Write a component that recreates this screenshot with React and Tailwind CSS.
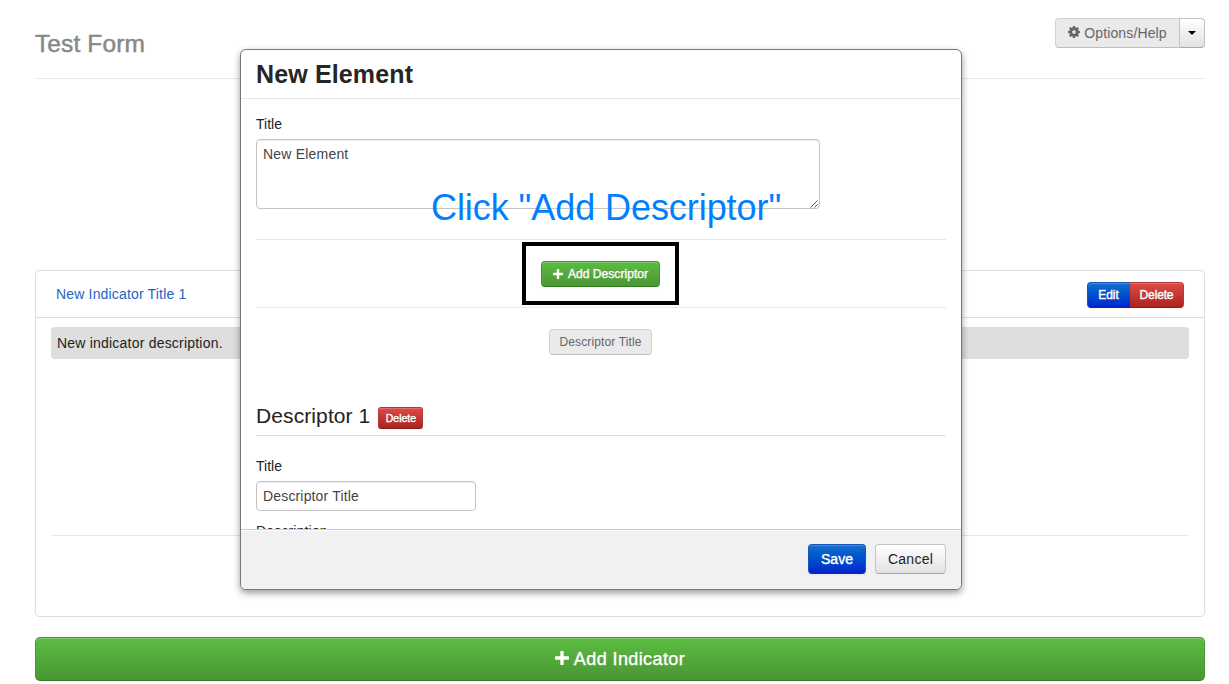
import React from "react";

function Plus({ className }) {
  return (
    <svg viewBox="0 0 14 14" className={className} fill="currentColor" aria-hidden="true">
      <path d="M6 0h2q.7 0 .7 .7v4.600h4.600q.7 0 .7 .7v2q0 .7-.7 .7H8.700v4.600q0 .7-.7 .7H6q-.7 0-.7-.7V8.700H.7Q0 8.700 0 8V6q0-.7 .7-.7h4.600V.7Q5.300 0 6 0z" />
    </svg>
  );
}

function Cog({ className }) {
  const angles = [0, 45, 90, 135, 180, 225, 270, 315];
  return (
    <svg viewBox="0 0 12 12" className={className} aria-hidden="true">
      {angles.map((a) => (
        <path key={a} d="M4.900 0h2.200l.4 2.500h-3z" fill="currentColor" transform={`rotate(${a} 6 6)`} />
      ))}
      <circle cx="6" cy="6" r="3.200" fill="none" stroke="currentColor" strokeWidth="2.700" />
    </svg>
  );
}

const btn =
  "flex items-center justify-center border whitespace-nowrap [text-shadow:0_-1px_0_rgba(0,0,0,0.25)] text-white shadow-[inset_0_1px_0_rgba(255,255,255,0.2),0_1px_2px_rgba(0,0,0,0.05)]";
const green = "bg-linear-to-b from-[#5bbd42] to-[#4a9634] border-[#4a9634] border-b-[#357a22]";
const blue = "bg-linear-to-b from-[#1a6fcb] to-[#0520cd] border-[#1455b8] border-b-[#0a2bb0]";
const red = "bg-linear-to-b from-[#e04a47] to-[#a9231f] border-[#b43a36] border-b-[#8a1f1c]";
const bold = "[-webkit-text-stroke:0.4px_currentColor]";

function PageHeader() {
  return (
    <header className="flex h-[79px] items-start justify-between border-b border-[#e8e8e8]">
      <h1 className="mt-[24px] text-[24.5px] leading-[40px] tracking-[0.12px] text-[#888] [-webkit-text-stroke:0.5px_#888]">
        Test Form
      </h1>
      <div className="mt-[18px] flex h-[30px] text-[14px]">
        <button className="flex w-[124px] items-center justify-center gap-[4px] rounded-l-[4px] border border-r-0 border-[#d2d2d2] border-b-[#bfbfbf] bg-[#eaeaea] tracking-[0.14px] text-[#666]">
          <Cog className="h-[12px] w-[12px] -translate-y-px" />
          Options/Help
        </button>
        <button className="flex w-[26px] items-center justify-center rounded-r-[4px] border border-[#c2c2c2] border-b-[#a8a8a8] bg-linear-to-b from-white to-[#e2e2e2]">
          <svg viewBox="0 0 8 4" className="h-[4px] w-[8px]">
            <path d="M0 0h8L4 4z" fill="#000" />
          </svg>
        </button>
      </div>
    </header>
  );
}

function IndicatorPanel() {
  return (
    <section className="mt-[191px] flex h-[347px] flex-col rounded-[4px] border border-[#dedede]">
      <div className="flex h-[47px] items-center justify-between border-b border-[#dedede] pr-[20px] pl-[20px]">
        <a className="text-[14px] leading-[20px] tracking-[0.17px] text-[#2165c4]">New Indicator Title 1</a>
        <div className="mt-[2px] flex h-[26px] text-[12px]">
          <button className={`${btn} ${blue} ${bold} w-[43px] rounded-l-[4px] border-r-0 pr-px`}>Edit</button>
          <button className={`${btn} ${red} ${bold} w-[54px] rounded-r-[4px] border-l-0 tracking-[-0.15px]`}>Delete</button>
        </div>
      </div>
      <div className="mx-[15px] mt-[9px] flex h-[32px] items-center rounded-[4px] bg-[#dedede] px-[6px] text-[14px] tracking-[0.21px] text-[#222]">
        New indicator description.
      </div>
      <div className="mx-[15px] mt-[176px] border-t border-[#e8e8e8]" />
    </section>
  );
}

function Modal() {
  return (
    <div className="absolute top-[49px] left-[240px] flex h-[541px] w-[722px] flex-col overflow-hidden rounded-[6px] border border-[#777] bg-white shadow-[0_3px_7px_rgba(0,0,0,0.4)]">
      <div className="flex h-[49px] shrink-0 items-center border-b border-[#e5e5e5] px-[15px] pb-px">
        <h2 className="text-[25px] leading-[30px] font-bold tracking-[0.14px] text-[#262626]">New Element</h2>
      </div>
      <div className="h-[430px] shrink-0 overflow-hidden px-[15px] pt-[15px] text-[14px] leading-[20px] text-[#222]">
        <label className="block">Title</label>
        <div className="mt-[5px] flex h-[70px] w-[564px] items-start justify-between rounded-[4px] border border-[#c4c4c4] px-[6px] pt-[4px] text-[#444] shadow-[inset_0_1px_1px_rgba(0,0,0,0.075)]">
          <span className="tracking-[0.2px]">New Element</span>
          <svg viewBox="0 0 8 8" className="mt-[56px] -mr-[5px] h-[8px] w-[8px]" fill="none" stroke="#555">
            <path d="M.5 7.500l7-7M4.500 7.500l3-3" />
          </svg>
        </div>
        <div className="mt-[30px] border-t border-[#e8e8e8]" />
        <div className="flex h-[67px] items-start justify-center pt-[21px] pr-px">
          <button className={`${btn} ${green} ${bold} h-[26px] w-[119px] gap-[5px] rounded-[4px] text-[12px] tracking-[0.06px]`}>
            <Plus className="h-[10px] w-[10px]" />
            Add Descriptor
          </button>
        </div>
        <div className="border-t border-[#e8e8e8]" />
        <div className="mt-[21px] flex justify-center pr-[2px]">
          <button className="h-[26px] w-[103px] rounded-[4px] border border-[#d2d2d2] border-b-[#bfbfbf] bg-[#eaeaea] pl-px text-[12px] leading-[24px] tracking-[0.12px] text-[#666]">
            Descriptor Title
          </button>
        </div>
        <div className="mt-[45px] flex h-[36px] items-start gap-[8px] border-b border-[#dedede]">
          <h3 className="pt-px text-[21px] leading-[30px] tracking-[0.1px]">Descriptor 1</h3>
          <button className={`${btn} ${red} ${bold} mt-[7px] h-[22px] w-[45px] rounded-[3px] text-[10.5px]`}>Delete</button>
        </div>
        <label className="mt-[20px] block">Title</label>
        <div className="mt-[5px] h-[30px] w-[220px] rounded-[4px] border border-[#c4c4c4] px-[6px] pt-[4px] tracking-[0.16px] text-[#444] shadow-[inset_0_1px_1px_rgba(0,0,0,0.075)]">
          Descriptor Title
        </div>
        <label className="mt-[10px] block tracking-[0.16px]">Description</label>
      </div>
      <div className="flex flex-1 justify-end gap-[9px] border-t border-[#ccc] bg-[#f1f1f1] px-[15px] pt-[14px] text-[14px] shadow-[inset_0_1px_0_#fff]">
        <button className={`${btn} ${blue} ${bold} h-[30px] w-[58px] rounded-[4px]`}>Save</button>
        <button className="h-[30px] w-[71px] rounded-[4px] border border-[#c4c4c4] border-b-[#a8a8a8] bg-linear-to-b from-white to-[#e2e2e2] tracking-[0.25px] text-[#222]">
          Cancel
        </button>
      </div>
    </div>
  );
}

export default function App() {
  return (
    <div className="relative h-[684px] w-[1229px] overflow-hidden bg-white pr-[24px] pl-[35px] font-['Liberation_Sans',Arial,sans-serif]">
      <PageHeader />
      <IndicatorPanel />
      <button className={`${btn} ${green} ${bold} mt-[20px] h-[44px] w-full gap-[5px] rounded-[5px] text-[18px] tracking-[0.4px]`}>
        <Plus className="h-[14px] w-[14px] -translate-y-px" />
        Add Indicator
      </button>
      <Modal />
      <div className="absolute top-[186px] left-[431px] text-[36px] leading-[44px] tracking-[-0.07px] whitespace-nowrap text-[#0080ff]">
        Click "Add Descriptor"
      </div>
      <div className="absolute top-[242px] left-[522px] h-[63px] w-[157px] border-4 border-black" />
    </div>
  );
}
